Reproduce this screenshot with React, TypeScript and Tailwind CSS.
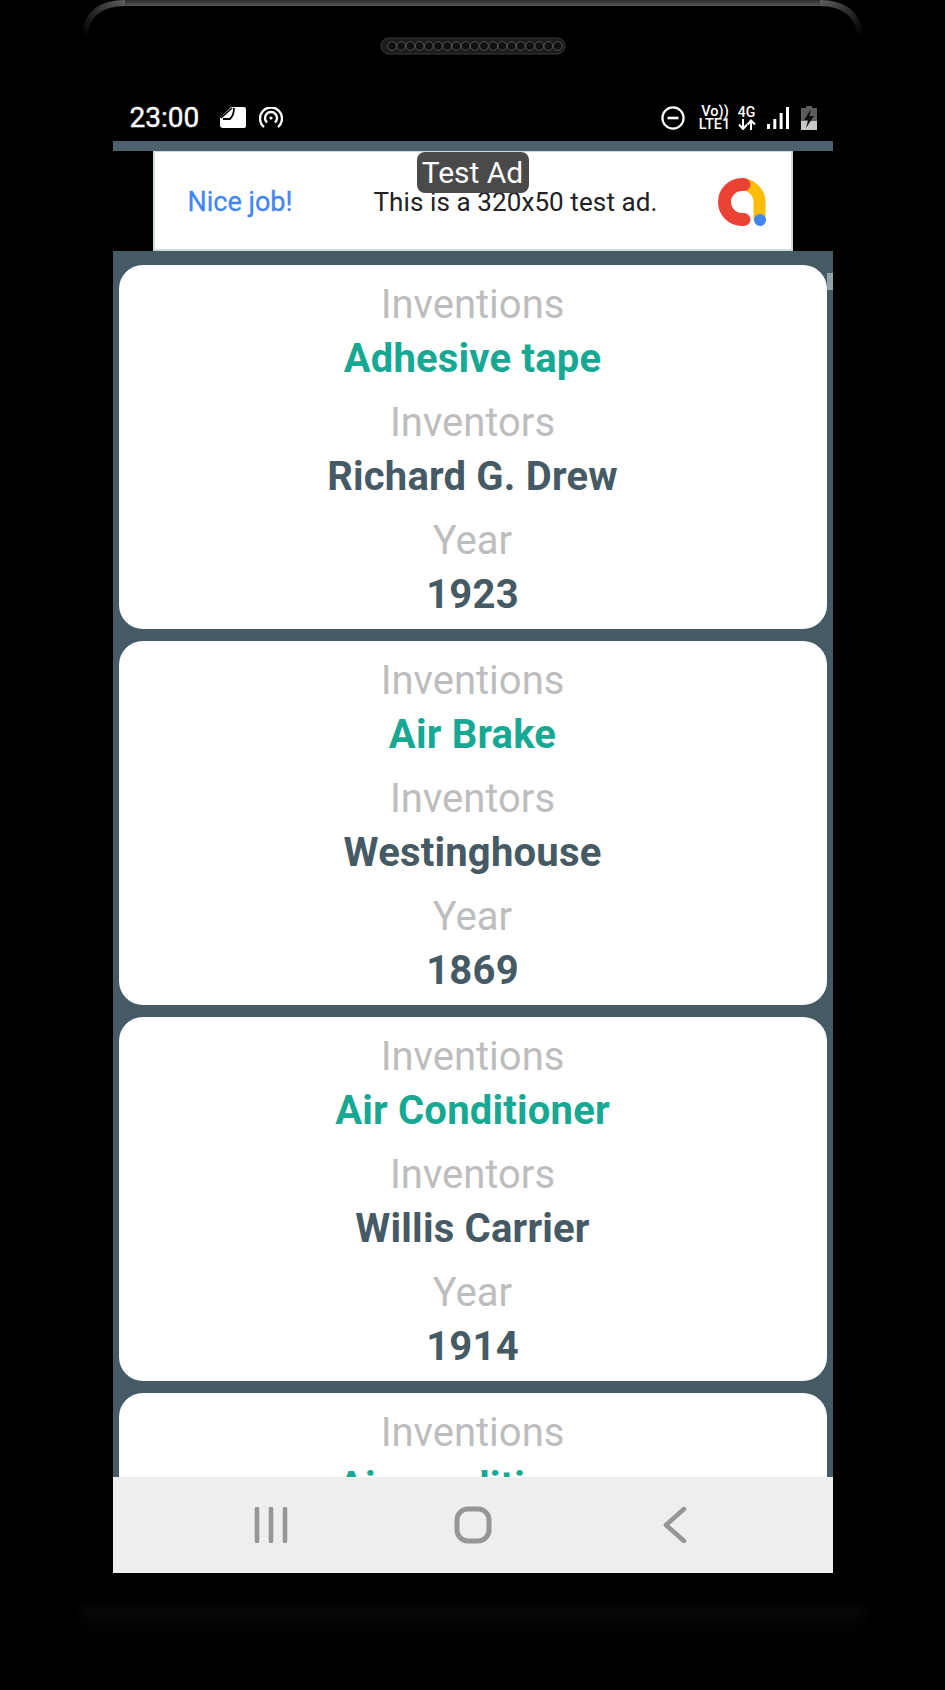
const cards = [
  { invention: "Adhesive tape", inventor: "Richard G. Drew", year: "1923" },
  { invention: "Air Brake", inventor: "Westinghouse", year: "1869" },
  { invention: "Air Conditioner", inventor: "Willis Carrier", year: "1914" },
  { invention: "Air conditioner", inventor: "Willis Carrier", year: "1902" },
];

function Pair({ label, value, color }: { label: string; value: string; color: string }) {
  return (
    <div className="flex flex-col items-center">
      <div className="h-[54px] leading-[56px] text-[40px] font-normal text-[#bdbdbd] [font-family:Roboto,sans-serif]">{label}</div>
      <div className={`h-[54px] leading-[56px] text-[40px] font-bold tracking-[0.2px] [font-family:Roboto,sans-serif] ${color}`}>{value}</div>
    </div>
  );
}

function Card({ invention, inventor, year }: { invention: string; inventor: string; year: string }) {
  return (
    <div className="shrink-0 h-[364px] rounded-[24px] bg-white pt-[12px] flex flex-col gap-[10px]">
      <Pair label="Inventions" value={invention} color="text-[#17a893]" />
      <Pair label="Inventors" value={inventor} color="text-[#455a64]" />
      <Pair label="Year" value={year} color="text-[#455a64]" />
    </div>
  );
}

function Speaker() {
  return (
    <svg width="186" height="18" viewBox="0 0 186 18" className="block">
      <rect x="1" y="1" width="184" height="16" rx="8" fill="#1c1c1c" stroke="#3a3a3a" />
      {Array.from({ length: 19 }).map((_, i) => (
        <circle key={i} cx={12 + i * 9.2} cy="9" r="4.4" fill="#111" stroke="#555" strokeWidth="1" />
      ))}
    </svg>
  );
}

function StatusBar() {
  return (
    <div className="h-[48px] flex items-center justify-between pl-[17px] pr-[16px] pt-[1px] text-white [font-family:Roboto,sans-serif]">
      <div className="flex items-center">
        <span className="text-[28px] font-normal leading-none w-[90px] [-webkit-text-stroke:0.4px_#fff]">23:00</span>
        <svg width="26" height="21" viewBox="0 0 26 21" className="block">
          <path d="M11 0H24a2 2 0 0 1 2 2V19a2 2 0 0 1-2 2H3a3 3 0 0 1-3-3V11Z" fill="#fff" />
          <path d="M0 9L9 0H0Z" fill="#000" />
          <path d="M1 11L12 1" stroke="#000" strokeWidth="1.6" fill="none" />
          <path d="M3 12H10Q14 8 14 1" stroke="#000" strokeWidth="1.8" fill="none" />
        </svg>
        <svg width="24" height="22" viewBox="0 0 24 22" fill="none" stroke="#fff" strokeWidth="2.4" className="block ml-[13px]">
          <path d="M5 20A11 11 0 1 1 19 20" />
          <path d="M8 15.5A6 6 0 1 1 16 15.5" />
          <circle cx="12" cy="11" r="1.6" fill="#fff" stroke="none" />
        </svg>
      </div>
      <div className="flex items-center">
        <svg width="24" height="24" viewBox="0 0 24 24" fill="none" stroke="#fff" strokeWidth="2.2" className="block">
          <circle cx="12" cy="12" r="10.6" />
          <path d="M6.5 12H17.5" strokeWidth="2.6" />
        </svg>
        <div className="ml-[15px] w-[30px] flex flex-col items-center text-[14.5px] font-medium leading-[13px] whitespace-nowrap">
          <span className="pl-[1px]">Vo))</span>
          <span>LTE1</span>
        </div>
        <div className="ml-[8px] w-[18px] flex flex-col items-center text-[14px] font-medium leading-[13px]">
          <span>4G</span>
          <svg width="18" height="11" viewBox="0 0 18 11" fill="none" stroke="#fff" strokeWidth="2" className="block">
            <path d="M5 0V9M1 5.5L5 10L9 5.5" />
            <path d="M13 11V2M9.5 5.5L13 1.5L17 5.5" />
          </svg>
        </div>
        <svg width="22" height="22" viewBox="0 0 22 22" fill="#fff" className="block ml-[11px]">
          <rect x="0" y="17" width="3" height="5" />
          <rect x="6.3" y="12" width="3" height="10" />
          <rect x="12.6" y="6" width="3" height="16" />
          <rect x="19" y="0" width="3" height="22" />
        </svg>
        <svg width="16" height="24" viewBox="0 0 16 24" className="block ml-[12px]">
          <path d="M5 0H11V2H16V24H0V2H5Z" fill="#5c5c5c" />
          <path d="M0 15H16V24H0Z" fill="#c8c8c8" />
          <path d="M10 3L3 14H7L5 22L13 10H8.5Z" fill="#111" />
        </svg>
      </div>
    </div>
  );
}

function AdBanner() {
  return (
    <div className="h-[100px] flex justify-center bg-black">
      <div className="relative w-[640px] h-[100px] bg-white border-x-[2px] border-b-[2px] border-t border-[#cfd8dc] flex items-center justify-between pl-[33px] pr-[24px] pt-[3px] [font-family:Roboto,sans-serif]">
        <span className="text-[27px] font-normal text-[#4285f4] [-webkit-text-stroke:0.3px_#4285f4]">Nice job!</span>
        <span className="text-[26px] text-[#202124] tracking-[0.1px] ml-[20px]">This is a 320x50 test ad.</span>
        <svg width="48" height="48" viewBox="0 0 48 48" fill="none" className="block">
          <path d="M24 6.5A17.5 17.5 0 0 1 41.5 24V42" stroke="#fbbc04" strokeWidth="12" />
          <path d="M26 6.5H24A17.5 17.5 0 0 0 24 41.5H26" stroke="#ea4335" strokeWidth="13" strokeLinecap="round" />
          <circle cx="42" cy="42" r="6" fill="#4285f4" />
        </svg>
        <div className="absolute left-[262px] top-0 w-[112px] h-[41px] bg-[#4a4a4a] rounded-[8px] flex items-center justify-center text-[30px] leading-none text-white font-normal">Test Ad</div>
      </div>
    </div>
  );
}

function NavBar() {
  return (
    <div className="shrink-0 h-[96px] bg-[#eeeeee] flex items-center justify-center pb-[1px]">
      <div className="w-[606px] grid grid-cols-3 items-center justify-items-center">
        <svg width="36" height="36" viewBox="0 0 36 36" fill="none" stroke="#969696" strokeWidth="4.6" strokeLinecap="round" className="block">
          <path d="M4 2V34M18 2V34M32 2V34" />
        </svg>
        <svg width="38" height="38" viewBox="0 0 38 38" fill="none" stroke="#969696" strokeWidth="5" className="block">
          <rect x="3" y="3" width="32" height="32" rx="11" />
        </svg>
        <svg width="24" height="36" viewBox="0 0 24 36" fill="none" stroke="#969696" strokeWidth="4.6" strokeLinecap="round" strokeLinejoin="round" className="block">
          <path d="M21 2L3 18L21 34" />
        </svg>
      </div>
    </div>
  );
}

function FrameTop() {
  return (
    <svg width="945" height="60" viewBox="0 0 945 60" fill="none" className="absolute left-0 top-0 block">
      <defs>
        <linearGradient id="rim" x1="0" y1="0" x2="0" y2="1">
          <stop offset="0" stopColor="#2c2c2c" />
          <stop offset="1" stopColor="#585858" />
        </linearGradient>
        <linearGradient id="rl" gradientUnits="userSpaceOnUse" x1="84" y1="36" x2="125" y2="3">
          <stop offset="0" stopColor="#000" />
          <stop offset="1" stopColor="#5c5c5c" />
        </linearGradient>
        <linearGradient id="rr" gradientUnits="userSpaceOnUse" x1="861" y1="36" x2="820" y2="3">
          <stop offset="0" stopColor="#000" />
          <stop offset="1" stopColor="#5c5c5c" />
        </linearGradient>
      </defs>
      <rect x="125" y="0" width="695" height="6" fill="url(#rim)" />
      <path d="M84 36Q88 3 125 3" stroke="url(#rl)" strokeWidth="6" />
      <path d="M861 36Q856 3 820 3" stroke="url(#rr)" strokeWidth="6" />
    </svg>
  );
}

export default function App() {
  return (
    <div className="relative w-[945px] h-[1690px] bg-black overflow-hidden flex flex-col items-center">
      <FrameTop />
      <div className="w-[720px] shrink-0 h-[141px] flex flex-col">
        <div className="flex justify-center pt-[37px] h-[93px]">
          <Speaker />
        </div>
        <StatusBar />
      </div>
      <div className="w-[720px] h-[1432px] shrink-0 flex flex-col">
        <div className="h-[10px] bg-[#4c616c] shrink-0" />
        <AdBanner />
        <div className="relative flex-1 min-h-0 overflow-hidden bg-[#455a64] px-[6px] pt-[14px] flex flex-col gap-[12px]">
          <div className="absolute right-0 top-[22px] w-[6px] h-[17px] bg-[#93a1a8]" />
          {cards.map((c, i) => (
            <Card key={i} {...c} />
          ))}
        </div>
        <NavBar />
      </div>
      <div className="mt-[34px] w-[785px] h-[46px] rounded-b-[30px] bg-linear-to-b from-[#0b0b0b] to-[#000000] blur-[5px]" />
    </div>
  );
}
